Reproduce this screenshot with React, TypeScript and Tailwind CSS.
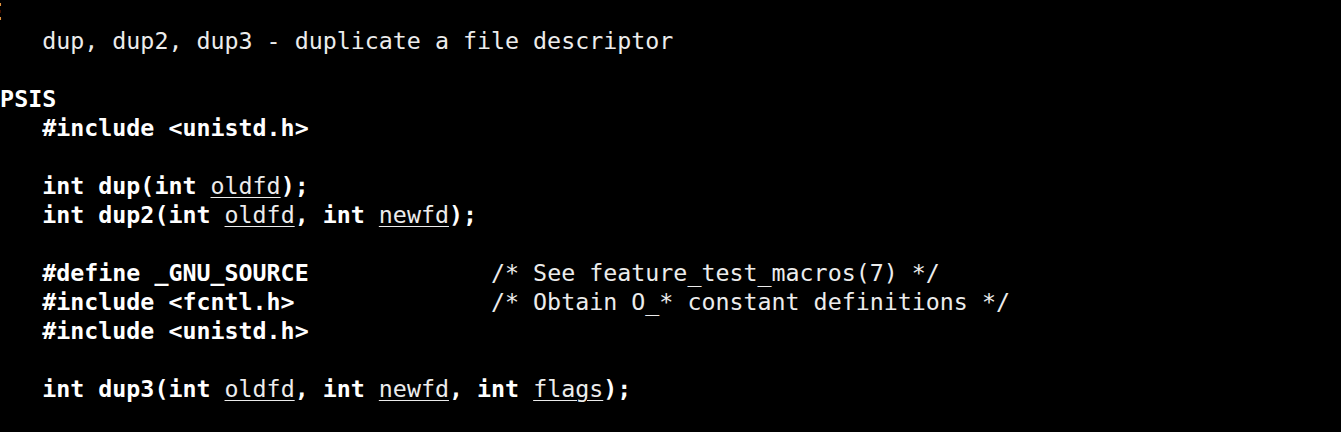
type Seg = { t: string; b?: boolean; u?: boolean; c?: string };

const lines: Seg[][] = [
    [{ t: 'NAME', b: true, c: 'text-[#a30000]' }],
    [{ t: '       dup, dup2, dup3 - duplicate a file descriptor' }],
    [],
    [{ t: 'SYNOPSIS', b: true }],
    [{ t: '       #include <unistd.h>', b: true }],
    [],
    [{ t: '       int dup(int ', b: true }, { t: 'oldfd', u: true }, { t: ');', b: true }],
    [
        { t: '       int dup2(int ', b: true },
        { t: 'oldfd', u: true },
        { t: ', int ', b: true },
        { t: 'newfd', u: true },
        { t: ');', b: true },
    ],
    [],
    [{ t: '       #define _GNU_SOURCE', b: true }, { t: '             /* See feature_test_macros(7) */' }],
    [{ t: '       #include <fcntl.h>', b: true }, { t: '              /* Obtain O_* constant definitions */' }],
    [{ t: '       #include <unistd.h>', b: true }],
    [],
    [
        { t: '       int dup3(int ', b: true },
        { t: 'oldfd', u: true },
        { t: ', int ', b: true },
        { t: 'newfd', u: true },
        { t: ', int ', b: true },
        { t: 'flags', u: true },
        { t: ');', b: true },
    ],
    [],
];

export default function App() {
    return (
        <div className="h-[432px] w-[1341px] overflow-hidden bg-black">
            <div className="ml-[-56px] mt-[-3px] font-['DejaVu_Sans_Mono',monospace] text-[23.3px] leading-[29px] text-[#ececec]">
                {lines.map((segs, i) => (
                    <div key={i} className={`h-[29px] whitespace-pre ${i === 0 ? 'pl-[2px]' : ''}`}>
                        {segs.map((s, j) => (
                            <span
                                key={j}
                                className={`${s.b ? 'font-bold text-white' : ''} ${s.u ? 'underline decoration-1 underline-offset-[3px]' : ''} ${s.c ?? ''}`}
                            >
                                {s.t}
                            </span>
                        ))}
                    </div>
                ))}
            </div>
        </div>
    );
}
